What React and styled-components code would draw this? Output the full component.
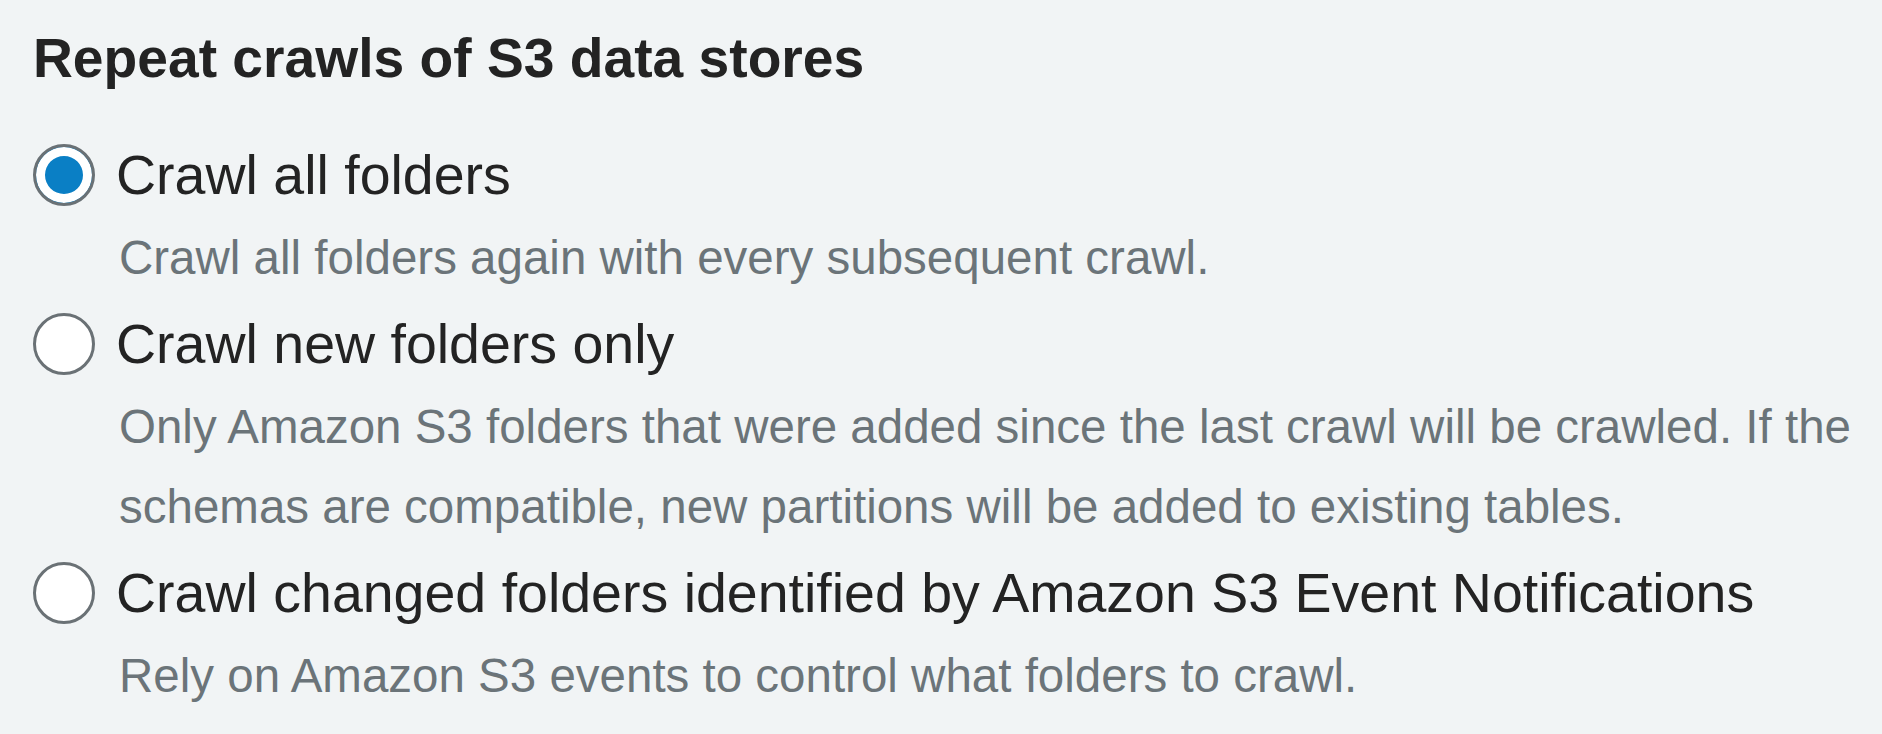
import React, { useState } from "react";
import styled, { createGlobalStyle } from "styled-components";

const GlobalStyle = createGlobalStyle`
  html, body {
    margin: 0;
    padding: 0;
    background: #f1f4f5;
  }
  * { box-sizing: border-box; }
`;

const Page = styled.div`
  padding: 18px 0 0 33px;
  font-family: "Liberation Sans", Arial, Helvetica, sans-serif;
  color: #232323;
`;

const Heading = styled.h2`
  margin: 0;
  font-size: 55.2px;
  line-height: 80px;
  font-weight: 700;
  color: #232323;
`;

const Options = styled.div`
  margin-top: 34px;
  display: flex;
  flex-direction: column;
  gap: 3px;
`;

const Option = styled.label`
  display: grid;
  grid-template-columns: 62px 1fr;
  column-gap: 21px;
  cursor: pointer;
`;

const Radio = styled.input.attrs({ type: "radio" })`
  appearance: none;
  -webkit-appearance: none;
  margin: 0;
  width: 62px;
  height: 62px;
  border-radius: 50%;
  border: 3px solid #6a7175;
  background: #fff;
  align-self: center;
  grid-row: 1;
  grid-column: 1;
  cursor: pointer;

  &:checked {
    background: #0a7fc5;
    box-shadow: inset 0 0 0 9px #fff;
  }
`;

const LabelText = styled.span`
  grid-row: 1;
  grid-column: 2;
  font-size: 55.5px;
  line-height: 86px;
  color: #232323;
`;

const Description = styled.span`
  grid-row: 2;
  grid-column: 2;
  padding-left: 3px;
  font-size: 47.5px;
  line-height: 80px;
  color: #6b7479;
`;

const options = [
  {
    id: "all",
    label: "Crawl all folders",
    description: "Crawl all folders again with every subsequent crawl.",
  },
  {
    id: "new",
    label: "Crawl new folders only",
    description:
      "Only Amazon S3 folders that were added since the last crawl will be crawled. If the schemas are compatible, new partitions will be added to existing tables.",
  },
  {
    id: "events",
    label: "Crawl changed folders identified by Amazon S3 Event Notifications",
    description: "Rely on Amazon S3 events to control what folders to crawl.",
  },
];

export default function App() {
  const [value, setValue] = useState("all");
  return (
    <>
      <GlobalStyle />
      <Page>
        <Heading>Repeat crawls of S3 data stores</Heading>
        <Options>
          {options.map((o) => (
            <Option key={o.id}>
              <Radio
                name="recrawl"
                value={o.id}
                checked={value === o.id}
                onChange={() => setValue(o.id)}
              />
              <LabelText>{o.label}</LabelText>
              <Description>{o.description}</Description>
            </Option>
          ))}
        </Options>
      </Page>
    </>
  );
}
